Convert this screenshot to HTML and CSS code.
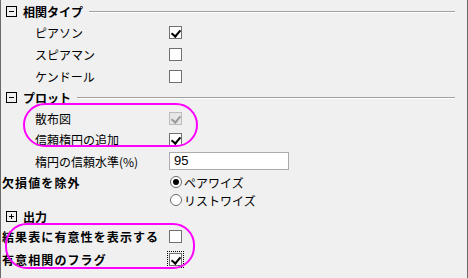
FILE: index.html
```html
<!DOCTYPE html>
<html lang="ja">
<head>
  <meta charset="UTF-8" />
  <title>相関設定</title>
  <link rel="stylesheet" href="styles.css">
</head>
<body>
  <div class="panel">
    <!-- 相関タイプ -->
    <div class="group-header h-first">
      <span class="toggle">
        <svg width="11" height="11" viewBox="0 0 11 11"><rect x="0.5" y="0.5" width="10" height="10" fill="none" stroke="#000"/><path d="M3 5.5h5" stroke="#000"/></svg>
      </span>
      <span class="group-title">相関タイプ</span>
      <span class="etched"></span>
    </div>
    <div class="row r22 indent"><span class="label">ピアソン</span><span class="check checked"></span></div>
    <div class="row r22 indent"><span class="label">スピアマン</span><span class="check"></span></div>
    <div class="row r22 indent"><span class="label">ケンドール</span><span class="check"></span></div>

    <!-- プロット -->
    <div class="group-header h-mid">
      <span class="toggle">
        <svg width="11" height="11" viewBox="0 0 11 11"><rect x="0.5" y="0.5" width="10" height="10" fill="none" stroke="#000"/><path d="M3 5.5h5" stroke="#000"/></svg>
      </span>
      <span class="group-title">プロット</span>
      <span class="etched"></span>
    </div>
    <div class="row r20 indent"><span class="label">散布図</span><span class="check checked disabled"></span></div>
    <div class="row r22 indent"><span class="label">信頼楕円の追加</span><span class="check checked"></span></div>
    <div class="row r22 indent"><span class="label">楕円の信頼水準(%)</span><span class="textbox">95</span></div>

    <div class="row r20 bold-row"><span class="label strong">欠損値を除外</span>
      <span class="radio-line"><span class="radio on"></span>ペアワイズ</span>
    </div>
    <div class="row r16"><span class="label"></span>
      <span class="radio-line"><span class="radio"></span>リストワイズ</span>
    </div>

    <!-- 出力 -->
    <div class="group-header h-last">
      <span class="toggle">
        <svg width="11" height="11" viewBox="0 0 11 11"><rect x="0.5" y="0.5" width="10" height="10" fill="none" stroke="#000"/><path d="M3 5.5h5M5.5 3v5" stroke="#000"/></svg>
      </span>
      <span class="group-title">出力</span>
    </div>
    <div class="row r23 bold-row"><span class="label strong">結果表に有意性を表示する</span><span class="check"></span></div>
    <div class="row r22 bold-row"><span class="label strong">有意相関のフラグ</span><span class="check checked focused"></span></div>

    <!-- annotation marks -->
    <div class="mark mark-plot"></div>
    <div class="mark mark-output"></div>
  </div>
</body>
</html>
```

FILE: styles.css
```css
* {
  box-sizing: border-box;
  margin: 0;
  padding: 0;
}

body {
  font-family: "Noto Sans CJK JP", "Noto Sans", sans-serif;
  font-size: 12px;
  color: #000;
  background-color: #f0f0f0;
  width: 468px;
  height: 278px;
  overflow: hidden;
}

.panel {
  position: relative;
  width: 468px;
  height: 278px;
  background-color: #f0f0f0;
  border-left: 1px solid #6a6a6a;
  border-right: 1px solid #6a6a6a;
  padding-top: 2px;
}

/* group headers */
.group-header {
  display: flex;
  align-items: center;
  height: 20px;
  padding-left: 5px;
}

.h-first { height: 19px; }
.h-mid { height: 21px; }
.h-last { height: 17px; }

.toggle {
  display: flex;
  width: 11px;
  height: 11px;
  margin-right: 6px;
}

.group-title {
  font-weight: 700;
  margin-right: 6px;
}

.etched {
  flex: 1;
  height: 0;
  margin-right: 12px;
  border-top: 1px solid #a0a0a0;
  border-bottom: 1px solid #ffffff;
}

/* rows */
.row {
  display: flex;
  align-items: center;
}

.r16 { height: 16px; }
.r20 { height: 20px; }
.r22 { height: 22px; }
.r23 { height: 23px; }

.label {
  width: 168px;
  flex-shrink: 0;
  white-space: nowrap;
}

.indent .label {
  padding-left: 34px;
}

.bold-row .label {
  padding-left: 1px;
}

.strong {
  font-weight: 700;
  letter-spacing: 1.1px;
}

/* checkbox */
.check {
  position: relative;
  width: 13px;
  height: 13px;
  border: 1px solid #707070;
  background-color: #ffffff;
}

.check.checked::after {
  content: "";
  position: absolute;
  left: 3px;
  top: 1px;
  width: 4px;
  height: 7px;
  border-right: 2px solid #000;
  border-bottom: 2px solid #000;
  transform: rotate(40deg);
}

.check.disabled {
  border-color: #bcbcbc;
  background-color: #e6e6e6;
}

.check.disabled::after {
  border-color: #9a9a9a;
}

.check.focused {
  outline: 1px dotted #000;
  outline-offset: 1px;
}

/* text field */
.textbox {
  width: 120px;
  height: 18px;
  border: 1px solid #ababab;
  background-color: #ffffff;
  font-family: "Liberation Sans", sans-serif;
  font-size: 13px;
  line-height: 16px;
  padding-left: 4px;
}

/* radios */
.radio-line {
  display: flex;
  align-items: center;
  gap: 2px;
}

.radio {
  position: relative;
  width: 12px;
  height: 12px;
  border: 1px solid #6a6a6a;
  border-radius: 50%;
  background-color: #ffffff;
  margin-left: 1px;
}

.radio.on::after {
  content: "";
  position: absolute;
  left: 2px;
  top: 2px;
  width: 6px;
  height: 6px;
  border-radius: 50%;
  background-color: #000;
}

/* magenta annotation outlines */
.mark {
  position: absolute;
  border: 2px solid #ff00ff;
  border-radius: 22px;
}

.mark-plot {
  left: 22px;
  top: 103px;
  width: 175px;
  height: 44px;
}

.mark-output {
  left: 4px;
  top: 223px;
  width: 190px;
  height: 46px;
}
```
